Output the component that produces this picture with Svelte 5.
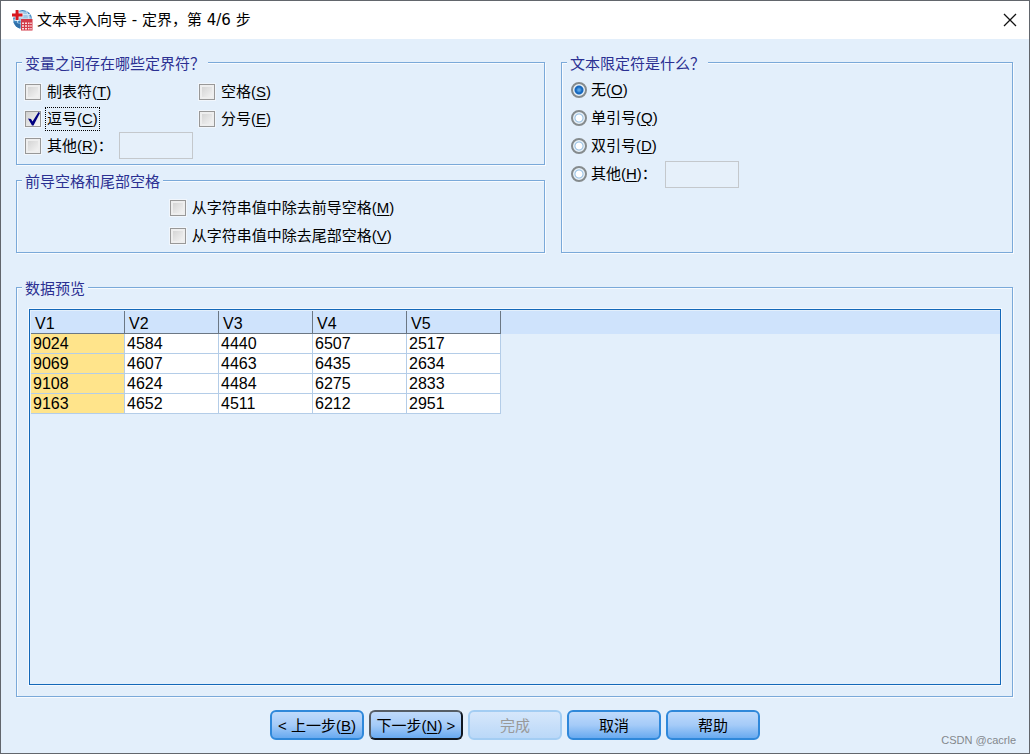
<script>
    let delimiters = [
        { id: 'tab', text: '制表符', key: 'T', checked: false },
        { id: 'space', text: '空格', key: 'S', checked: false },
        { id: 'comma', text: '逗号', key: 'C', checked: true },
        { id: 'semicolon', text: '分号', key: 'E', checked: false },
    ];
    let otherDelimiter = false;
    let delimiterText = '';

    let trims = [
        { id: 'leading', text: '从字符串值中除去前导空格', key: 'M', checked: false },
        { id: 'trailing', text: '从字符串值中除去尾部空格', key: 'V', checked: false },
    ];

    const qualifiers = [
        { id: 'none', text: '无', key: 'O' },
        { id: 'single', text: '单引号', key: 'Q' },
        { id: 'double', text: '双引号', key: 'D' },
        { id: 'other', text: '其他', key: 'H' },
    ];
    let qualifier = 'none';
    let qualifierText = '';

    const columns = ['V1', 'V2', 'V3', 'V4', 'V5'];
    const rows = [
        [9024, 4584, 4440, 6507, 2517],
        [9069, 4607, 4463, 6435, 2634],
        [9108, 4624, 4484, 6275, 2833],
        [9163, 4652, 4511, 6212, 2951],
    ];
</script>

<div class="window">
    <header>
        <svg class="logo" viewBox="0 0 22 22" aria-hidden="true">
            <circle cx="11.500" cy="10.500" r="9.500" fill="#3f86c0" />
            <path d="M8 2.500c5-2 10 1 12 6.500l-1 1H8z" fill="#9fc8e6" />
            <path d="M2 11h18M3 15h9M14.500 1.500c2 2 3 5 3 8M6.500 11c0 3 1 6 3 8.500M10 5.500h9" fill="none" stroke="#d8eaf6" stroke-width="0.9" />
            <path d="M2.500 13c1 3 3.500 6 7 6.700V15z" fill="#2f6ea8" />
            <path d="M3.800 0h4.500v3.500h4v5h-4V12H3.800V8.500H0v-5h3.800z" fill="#fff" opacity="0.7" />
            <path d="M4.600 1h2.900v3.600h4v2.900h-4V11H4.600V7.500H1V4.600h3.600z" fill="#d8171f" />
            <path d="M9.500 9.500H22V22H9.500z" fill="#fff" opacity="0.6" />
            <rect x="10" y="10" width="11.500" height="11.500" fill="#d23a48" />
            <path d="M11 13.500h2v1.500h-2zM14 13.500h2v1.500h-2zM17 13.500h1.500v1.500H17zM19.300 13.500h1.400v1.500h-1.400zM11 16.200h2v1.500h-2zM14 16.200h2v1.500h-2zM17 16.200h1.500v1.500H17zM19.300 16.200h1.400v1.500h-1.400zM11 19h2v1.500h-2zM14 19h2v1.500h-2zM17 19h1.500v1.500H17zM19.300 19h1.400v1.500h-1.400z" fill="#fbe3e5" />
        </svg>
        <h1>文本导入向导 - 定界，第 4/6 步</h1>
        <button class="close" aria-label="关闭">
            <svg viewBox="0 0 14 14" aria-hidden="true">
                <path d="M1 1l12 12M13 1L1 13" stroke="#111" stroke-width="1.3" />
            </svg>
        </button>
    </header>

    <main>
        <div class="options">
            <div class="left">
                <fieldset>
                    <legend>变量之间存在哪些定界符？</legend>
                    <div class="delimiters">
                        {#each delimiters as item}
                            <label class="row">
                                <input type="checkbox" bind:checked={item.checked} />
                                <span class:focused={item.id === 'comma'}>{item.text}(<u>{item.key}</u>)</span>
                            </label>
                        {/each}
                        <div class="row">
                            <input id="other-delimiter" type="checkbox" bind:checked={otherDelimiter} />
                            <label for="other-delimiter">其他(<u>R</u>)：</label>
                            <input type="text" aria-label="其他定界符" bind:value={delimiterText} disabled={!otherDelimiter} />
                        </div>
                    </div>
                </fieldset>

                <fieldset>
                    <legend>前导空格和尾部空格</legend>
                    <div class="trims">
                        <div>
                            {#each trims as item}
                                <label class="row">
                                    <input type="checkbox" bind:checked={item.checked} />
                                    <span>{item.text}(<u>{item.key}</u>)</span>
                                </label>
                            {/each}
                        </div>
                    </div>
                </fieldset>
            </div>

            <fieldset>
                <legend>文本限定符是什么？</legend>
                <div class="qualifiers">
                    {#each qualifiers as item}
                        <div class="row">
                            <input id={item.id} type="radio" name="qualifier" value={item.id} bind:group={qualifier} />
                            <label for={item.id}>{item.text}(<u>{item.key}</u>){item.id === 'other' ? '：' : ''}</label>
                            {#if item.id === 'other'}
                                <input type="text" aria-label="其他限定符" bind:value={qualifierText} disabled={qualifier !== 'other'} />
                            {/if}
                        </div>
                    {/each}
                </div>
            </fieldset>
        </div>

        <fieldset class="preview">
            <legend>数据预览</legend>
            <div class="grid">
                <table>
                    <thead>
                        <tr>
                            {#each columns as column}
                                <th>{column}</th>
                            {/each}
                            <td></td>
                        </tr>
                    </thead>
                    <tbody>
                        {#each rows as row}
                            <tr>
                                {#each row as value}
                                    <td>{value}</td>
                                {/each}
                            </tr>
                        {/each}
                    </tbody>
                </table>
            </div>
        </fieldset>
    </main>

    <footer>
        <button class="action">&lt; 上一步(<u>B</u>)</button>
        <button class="action default">下一步(<u>N</u>) &gt;</button>
        <button class="action" disabled>完成</button>
        <button class="action">取消</button>
        <button class="action">帮助</button>
        <span class="watermark">CSDN @cacrle</span>
    </footer>
</div>

<style>
    .window {
        box-sizing: border-box;
        height: 100vh;
        min-height: 560px;
        display: flex;
        flex-direction: column;
        border: 1px solid #62666c;
        background: #e3effb;
        color: #000;
        font: 15px/20px "Liberation Sans", "Noto Sans CJK SC", sans-serif;
    }

    header {
        display: flex;
        align-items: center;
        height: 38px;
        padding: 0 12px 0 10px;
        background: #fff;
    }

    .logo {
        width: 22px;
        height: 22px;
        margin-right: 4px;
    }

    h1 {
        flex: 1;
        margin: 0;
        font: 15px/20px "DejaVu Sans", "Noto Sans CJK SC", sans-serif;
    }

    .close {
        display: flex;
        padding: 0;
        border: 0;
        background: none;
    }

    .close svg {
        width: 14px;
        height: 14px;
    }

    main {
        flex: 1;
        display: grid;
        grid-template-rows: auto 1fr;
        gap: 24px;
        padding: 13px 16px 0 15px;
    }

    .options {
        display: grid;
        grid-template-columns: 529fr 452fr;
        gap: 16px;
    }

    .left {
        display: flex;
        flex-direction: column;
        gap: 5px;
    }

    fieldset {
        min-width: 0;
        margin: 0;
        padding: 0;
        border: 1px solid #7aa9d9;
        box-shadow: 1px 1px 0 #f8fbff, inset 1px 1px 0 #f8fbff;
    }

    legend {
        margin-left: 5px;
        padding: 4px 3px 0;
        background: #e3effb;
        color: #2b3092;
        line-height: 16px;
    }

    .delimiters {
        display: grid;
        grid-template-columns: 174px 1fr;
        padding: 6px 8px 5px;
    }

    .trims {
        display: flex;
        justify-content: center;
        padding: 4px 0 2px 3px;
    }

    .qualifiers {
        padding: 4px 9px;
    }

    .row {
        display: flex;
        align-items: center;
        gap: 6px;
        height: 27px;
    }

    .trims .row,
    .qualifiers .row {
        height: 28px;
    }

    .qualifiers .row {
        gap: 4px;
    }

    u {
        text-underline-offset: 2px;
    }

    .focused {
        outline: 1px dotted #000;
        outline-offset: 1px;
    }

    input {
        flex: none;
        box-sizing: border-box;
        margin: 0;
    }

    input[type='checkbox'] {
        appearance: none;
        width: 16px;
        height: 16px;
        border: 1px solid #989898;
        background: linear-gradient(135deg, #cfcfcf, #f8f8f8);
        box-shadow: inset 0 0 0 2px #eeeeee, 0 0 0 1px #f1f6fc;
    }

    input[type='checkbox']:checked {
        background: url("data:image/svg+xml,%3Csvg xmlns='http://www.w3.org/2000/svg' viewBox='0 0 14 14'%3E%3Cpath d='M2 6.500L5 7l1.500 2.500L12.500 0 14 1 7.500 13.500H6z' fill='%23000080'/%3E%3C/svg%3E"), linear-gradient(135deg, #cfcfcf, #f8f8f8);
        box-shadow: 0 0 0 1px #f1f6fc;
    }

    input[type='radio'] {
        appearance: none;
        width: 16px;
        height: 16px;
        border: 2px solid #858b8d;
        border-radius: 50%;
        background: radial-gradient(circle, #fff 0 3px, #93bee3 4px, #e8f1f8 5px);
    }

    input[type='radio']:checked {
        background: radial-gradient(circle, #58a5e8 0 1px, #1768bd 3px 4px, #e8f1f8 5px);
    }

    input[type='text'] {
        width: 74px;
        height: 27px;
        border: 1px solid #c4c8cc;
        background: #e6f0fa;
        font: inherit;
    }

    .qualifiers input[type='text'] {
        margin-left: 4px;
    }

    .preview {
        display: grid;
    }

    .grid {
        margin: 12px 11px 11px 12px;
        padding: 1px 0 0 1px;
        border: 1px solid #1468b8;
        box-shadow: 0 0 0 1px #f4f9ff;
    }

    table {
        width: 100%;
        table-layout: fixed;
        border-collapse: separate;
        border-spacing: 0;
        font-size: 16px;
        line-height: 19px;
    }

    thead {
        background: #cfe3fc;
    }

    th {
        width: 94px;
        height: 23px;
        box-sizing: border-box;
        padding: 2px 4px 0;
        border-right: 1px solid #6b7784;
        border-bottom: 1px solid #6b7784;
        font-weight: normal;
        text-align: left;
    }

    tbody td {
        height: 19px;
        padding: 0 2px;
        border-right: 1px solid #b4cde8;
        border-bottom: 1px solid #b4cde8;
        background: #fff;
    }

    tbody td:first-child {
        background: #ffe48b;
    }

    footer {
        position: relative;
        display: flex;
        justify-content: center;
        gap: 5px;
        padding: 13px 0;
    }

    .action {
        width: 94px;
        height: 30px;
        padding: 2px 0 0;
        border: 2px solid #2f88da;
        border-radius: 6px;
        background: linear-gradient(#bfdafb, #a5cbf8 50%, #68aaf0);
        color: #000;
        font: inherit;
        white-space: nowrap;
    }

    .default {
        border-color: #555d66 #111820 #111820 #555d66;
    }

    .action:disabled {
        border-color: #a3cdf3;
        background: linear-gradient(#d6e7fb, #bad8f8);
        color: #999;
    }

    .watermark {
        position: absolute;
        right: 13px;
        bottom: 3px;
        color: #84888d;
        font-size: 11px;
    }
</style>
